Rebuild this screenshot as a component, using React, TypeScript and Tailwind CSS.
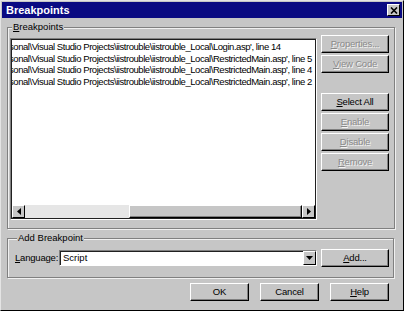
const font = "font-['Tahoma','Liberation_Sans',sans-serif]";

function Btn({
  children,
  disabled,
  className = "",
}: {
  children: React.ReactNode;
  disabled?: boolean;
  className?: string;
}) {
  return (
    <button
      type="button"
      className={
        "flex h-[18px] items-center justify-center border border-t-white border-l-white border-r-black border-b-black bg-[#c6c6c6] text-[9.5px] leading-none tracking-[-0.2px] shadow-[inset_-1px_-1px_#808080] " +
        (disabled
          ? "text-[#8a8a8a] [text-shadow:1px_1px_#f4f4f4] "
          : "text-black ") +
        className
      }
    >
      {children}
    </button>
  );
}

const rows = [
  "Login.asp', line 14",
  "RestrictedMain.asp', line 5",
  "RestrictedMain.asp', line 4",
  "RestrictedMain.asp', line 2",
];

export default function App() {
  return (
    <div
      className={`flex h-[311px] w-[404px] flex-col border border-t-[#e4e4e4] border-l-[#e4e4e4] border-r-black border-b-black bg-[#c6c6c6] p-px ${font}`}
    >
      {/* title bar */}
      <div className="flex h-[16px] items-center justify-between bg-[#0a0a82] pl-[4px] pr-[2px]">
        <span className="text-[11px] font-bold text-white">Breakpoints</span>
        <span className="flex h-[12px] w-[13px] items-center justify-center border border-t-white border-l-white border-r-black border-b-black bg-[#c6c6c6]">
          <svg width="8" height="7" viewBox="0 0 8 7">
            <path d="M1 0.5 L7 6.5 M7 0.5 L1 6.5" stroke="black" strokeWidth="1.6" />
          </svg>
        </span>
      </div>

      <fieldset className="mt-[3px] ml-[5px] h-[208px] w-[388px] border border-[#808080] px-[2px] pt-[5px] shadow-[1px_1px_#f0f0f0,inset_1px_1px_#f0f0f0]">
        <legend className="ml-[2px] bg-[#c6c6c6] px-[1px] text-[9.5px] leading-[12px] text-black">
          <span className="underline">B</span>reakpoints
        </legend>
        <div className="flex gap-[4px]">
          <div className="flex h-[182px] w-[307px] flex-col border border-t-[#808080] border-l-[#808080] border-r-white border-b-white">
            <div className="flex flex-1 flex-col overflow-hidden border border-[#202020] bg-white">
              <div className="flex-1 overflow-hidden pt-[1px]">
                {rows.map((r) => (
                  <div
                    key={r}
                    className="-ml-[3px] whitespace-nowrap text-[9.5px] leading-[11.5px] tracking-[-0.45px] text-black"
                  >
                    sonal\Visual Studio Projects\iistrouble\iistrouble_Local\{r}
                  </div>
                ))}
              </div>
              {/* horizontal scrollbar */}
              <div className="flex h-[13px]">
                <div className="flex w-[13px] items-center justify-center border border-t-white border-l-white border-r-black border-b-black bg-[#c6c6c6]">
                  <svg width="4" height="7" viewBox="0 0 4 7">
                    <path d="M4 0 L0 3.5 L4 7 Z" fill="black" />
                  </svg>
                </div>
                <div className="w-[104px] bg-[#e6e6e6]" />
                <div className="flex-1 border border-t-white border-l-white border-r-black border-b-black bg-[#c6c6c6] shadow-[inset_-1px_-1px_#808080]" />
                <div className="flex w-[13px] items-center justify-center border border-t-white border-l-white border-r-black border-b-black bg-[#c6c6c6]">
                  <svg width="4" height="7" viewBox="0 0 4 7">
                    <path d="M0 0 L4 3.5 L0 7 Z" fill="black" />
                  </svg>
                </div>
              </div>
            </div>
          </div>

          <div className="-mt-[3px] flex w-[68px] flex-col gap-[2px]">
            <Btn disabled>
              <span className="underline">P</span>roperties...
            </Btn>
            <Btn disabled>
              <span className="underline">V</span>iew Code
            </Btn>
            <Btn className="mt-[18px]">
              <span className="underline">S</span>elect All
            </Btn>
            <Btn disabled>
              <span className="underline">E</span>nable
            </Btn>
            <Btn disabled>
              <span className="underline">D</span>isable
            </Btn>
            <Btn disabled>
              <span className="underline">R</span>emove
            </Btn>
          </div>
        </div>
      </fieldset>

      <fieldset className="mt-[3px] ml-[5px] h-[46px] w-[387px] border border-[#808080] pl-[7px] pr-[4px] pt-[5px] shadow-[1px_1px_#f0f0f0,inset_1px_1px_#f0f0f0]">
        <legend className="ml-[2px] bg-[#c6c6c6] px-[1px] text-[9.5px] leading-[12px] text-black">
          Add Breakpoint
        </legend>
        <div className="flex items-center">
          <span className="w-[44px] whitespace-nowrap text-[9.5px] tracking-[-0.2px] text-black">
            <span className="underline">L</span>anguage:
          </span>
          <div className="flex h-[16px] w-[258px] border border-t-[#808080] border-l-[#808080] border-r-white border-b-white">
            <div className="flex flex-1 items-center border-t border-l border-[#202020] bg-white pl-[2px] text-[9.5px] text-black">
              Script
            </div>
            <div className="flex w-[13px] items-center justify-center border border-t-white border-l-white border-r-black border-b-black bg-[#c6c6c6]">
              <svg width="7" height="4" viewBox="0 0 7 4">
                <path d="M0 0 L7 0 L3.5 4 Z" fill="black" />
              </svg>
            </div>
          </div>
          <Btn className="ml-[4px] w-[68px]">
            <span className="underline">A</span>dd...
          </Btn>
        </div>
      </fieldset>

      <div className="mt-[5px] flex justify-end gap-[11px] pr-[13px]">
        <Btn className="w-[59px]">OK</Btn>
        <Btn className="w-[59px]">Cancel</Btn>
        <Btn className="w-[59px]">
          <span className="underline">H</span>elp
        </Btn>
      </div>
    </div>
  );
}
